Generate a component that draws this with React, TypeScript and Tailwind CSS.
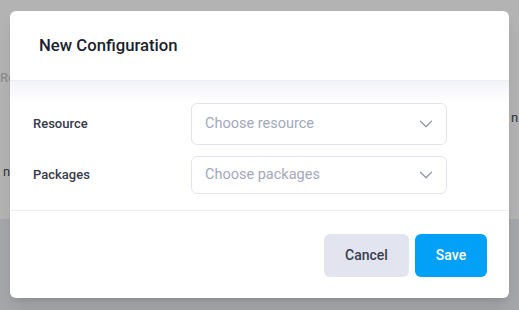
import { ChevronDown } from "lucide-react";

type FieldProps = {
  label: string;
  placeholder: string;
  height: string;
};

function SelectField({ label, placeholder, height }: FieldProps) {
  return (
    <div className="flex items-center">
      <label className="w-[181px] pl-[23px] text-[13px] font-medium text-[#363a4a]">{label}</label>
      <button
        type="button"
        className={`flex ${height} w-[256px] items-center justify-between rounded-md border border-[#e3e5ee] bg-white pl-[13px] pr-[9px] text-left`}
      >
        <span className="text-[14.5px] text-[#a4a8ba]">{placeholder}</span>
        <ChevronDown className="h-[22px] w-[22px] text-[#8f94a6]" strokeWidth={1.3} />
      </button>
    </div>
  );
}

export default function App() {
  return (
    <div className="relative h-[310px] w-[519px] overflow-hidden font-['Roboto',sans-serif]">
      {/* page behind the overlay */}
      <div className="flex h-full flex-col">
        <div className="h-[219px] bg-[#b3b3b3]" />
        <div className="flex-1 bg-[#a5a6aa]" />
      </div>
      <span className="absolute left-0 top-[68px] text-[13px] font-medium text-[#8d8d92]">Re</span>
      <span className="absolute left-[3px] top-[162px] text-[13px] text-[#2f3035]">n</span>
      <span className="absolute left-[511px] top-[108px] whitespace-nowrap text-[13px] text-[#2f3035]">n t</span>

      <div className="absolute left-[10px] top-[11px] flex h-[287px] w-[499px] flex-col overflow-hidden rounded-md bg-white shadow-lg">
        <div className="flex h-[70px] shrink-0 items-center border-b border-[#eceef3] px-[29px]">
          <h2 className="text-[16.7px] font-medium text-[#1b1f2e]">New Configuration</h2>
        </div>
        <div className="flex flex-col gap-[11px] border-b border-[#eceef3] bg-gradient-to-b from-[#f3f4f7] to-white to-[22px] pb-[16px] pt-[22px]">
          <SelectField label="Resource" placeholder="Choose resource" height="h-[42px]" />
          <SelectField label="Packages" placeholder="Choose packages" height="h-[38px]" />
        </div>
        <div className="flex flex-1 items-start justify-end gap-[6px] pr-[22px] pt-[23px]">
          <button
            type="button"
            className="h-[43px] w-[85px] rounded-md bg-[#e2e5ef] text-[14px] font-medium text-[#3a3e4e]"
          >
            Cancel
          </button>
          <button
            type="button"
            className="h-[43px] w-[72px] rounded-md bg-[#03a0f8] text-[14px] font-medium text-white"
          >
            Save
          </button>
        </div>
      </div>
    </div>
  );
}
